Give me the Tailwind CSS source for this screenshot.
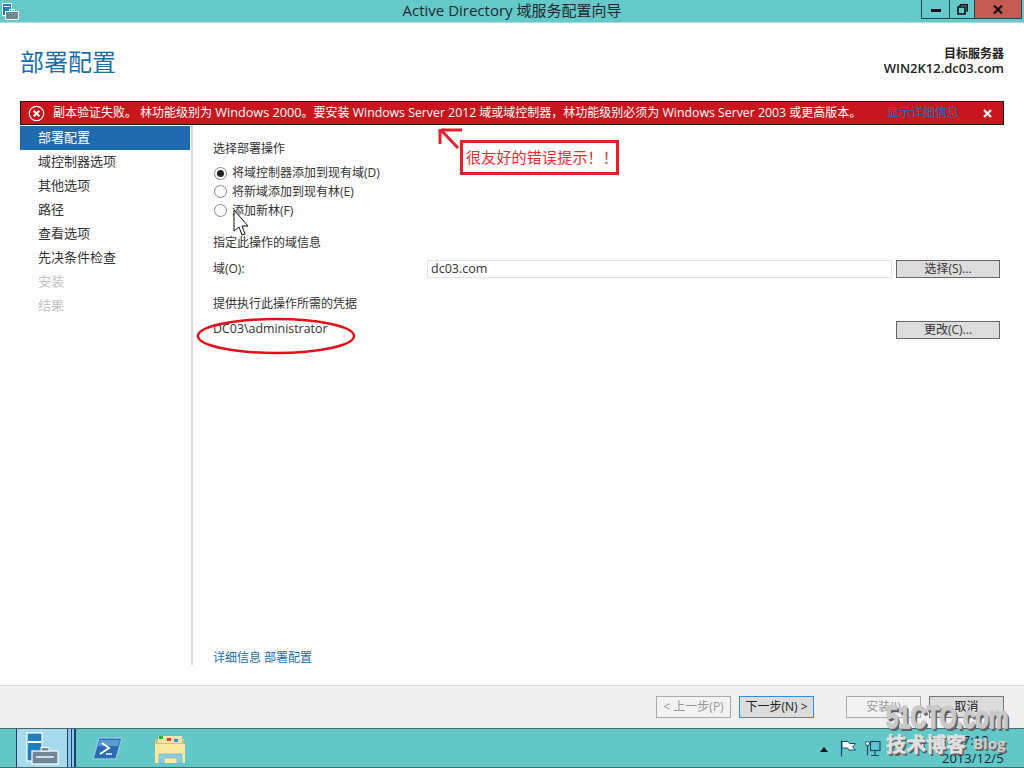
<!DOCTYPE html>
<html lang="zh-CN">
<head>
    <meta charset="UTF-8">
    <title>Active Directory 域服务配置向导</title>
    <script src="https://cdn.jsdelivr.net/npm/@tailwindcss/browser@4"></script>
</head>
<body class="bg-[#fdfdfd]">
    <div class="relative w-[1024px] h-[768px] overflow-hidden flex flex-col text-[12px] text-[#333] font-['Open_Sans','Noto_Sans_CJK_SC',sans-serif]">

        <!-- Title bar -->
        <div class="relative h-[23px] shrink-0 bg-[#64c9c8] border-b border-[#a9dcdc] flex items-center justify-center text-[15px] text-[#1e2a30]">
            <svg class="absolute left-[2px] top-[3px]" width="17" height="17" viewBox="0 0 17 17">
                <rect x="0.5" y="0.5" width="9" height="12" fill="#1f7fc0" stroke="#fff"/>
                <rect x="2" y="3" width="6" height="1" fill="#fff"/>
                <rect x="3.5" y="8.5" width="13" height="8" fill="#6f8796" stroke="#fff"/>
                <rect x="7.5" y="6.5" width="5" height="2" fill="none" stroke="#fff"/>
            </svg>
            <span class="relative top-[-1px]">Active Directory 域服务配置向导</span>
            <div class="absolute right-[2px] top-0 flex h-[19px] border border-t-0 border-[#1c4a5a]">
                <div class="w-[28px] flex items-center justify-center border-r border-[#1c4a5a]"><div class="w-[10px] h-[3px] mt-[3px] bg-[#111]"></div></div>
                <div class="w-[25px] flex items-center justify-center border-r border-[#1c4a5a]">
                    <svg width="11" height="11" viewBox="0 0 11 11"><path d="M3 0.8h7.2v7M3 0.8v2M8 3H1v7h7z" fill="none" stroke="#111" stroke-width="1.6"/></svg>
                </div>
                <div class="w-[46px] flex items-center justify-center bg-[#c75b52]">
                    <svg width="10" height="9" viewBox="0 0 10 9"><path d="M1 0.5l8 8M9 0.5l-8 8" stroke="#111" stroke-width="2.2"/></svg>
                </div>
            </div>
        </div>

        <!-- Header -->
        <div class="h-[78px] shrink-0 px-[20px] flex justify-between">
            <h1 class="mt-[22px] text-[24px] leading-[34px] text-[#1a6ea8] font-normal">部署配置</h1>
            <div class="mt-[23px] text-right font-semibold text-[#222] leading-[15px]">
                <div class="text-[12px]">目标服务器</div>
                <div class="text-[13px]">WIN2K12.dc03.com</div>
            </div>
        </div>

        <!-- Error banner -->
        <div class="mx-[20px] h-[24px] shrink-0 bg-[#c8161c] border border-[#1a1a1a] flex items-center text-white text-[12px] whitespace-nowrap">
            <svg class="ml-[7px] mr-[8px]" width="17" height="17" viewBox="0 0 17 17">
                <circle cx="8.5" cy="8.5" r="7.2" fill="none" stroke="#fff" stroke-width="1.2"/>
                <path d="M5.7 5.7l5.6 5.6M11.3 5.7l-5.6 5.6" stroke="#fff" stroke-width="2"/>
            </svg>
            <span class="w-[824px]">副本验证失败。 林功能级别为 <span class="text-[12.7px]">Windows 2000</span>。要安装 <span class="text-[12.3px]">Windows Server 2012</span> 域或域控制器，林功能级别必须为 <span class="text-[12.3px]">Windows Server 2003</span> 或更高版本。</span>
            <span class="text-[#1a6ec0] ml-[10px]">显示详细信息</span>
            <svg class="ml-auto mr-[11px]" width="9" height="9" viewBox="0 0 9 9"><path d="M1 1l7 7M8 1l-7 7" stroke="#fff" stroke-width="2.2"/></svg>
        </div>

        <!-- Main -->
        <div class="flex h-[560px] shrink-0">
            <nav class="w-[193px] shrink-0 pl-[20px] pt-[1px] h-[540px] border-r-2 border-[#d9d9d9] text-[13px]">
                <div class="h-[24px] leading-[22px] pl-[18px] w-[170px] bg-[#1e6bb0] text-white">部署配置</div>
                <div class="h-[24px] leading-[22px] pl-[18px]">域控制器选项</div>
                <div class="h-[24px] leading-[22px] pl-[18px]">其他选项</div>
                <div class="h-[24px] leading-[22px] pl-[18px]">路径</div>
                <div class="h-[24px] leading-[22px] pl-[18px]">查看选项</div>
                <div class="h-[24px] leading-[22px] pl-[18px]">先决条件检查</div>
                <div class="h-[24px] leading-[22px] pl-[18px] text-[#c4c4c4]">安装</div>
                <div class="h-[24px] leading-[22px] pl-[18px] text-[#c4c4c4]">结果</div>
            </nav>

            <div class="flex-1 pl-[20px] pr-[24px] flex flex-col">
                <div class="mt-[15px] h-[18px] leading-[18px]">选择部署操作</div>
                <div class="mt-[6px] flex flex-col">
                    <div class="h-[18px] flex items-center gap-[6px]">
                        <span class="ml-[1px] w-[13px] h-[13px] rounded-full border border-[#888] bg-white flex items-center justify-center"><span class="w-[7px] h-[7px] rounded-full bg-[#222]"></span></span>
                        <span class="-ml-[1px]">将域控制器添加到现有域(D)</span>
                    </div>
                    <div class="h-[19px] flex items-center gap-[6px]">
                        <span class="ml-[1px] w-[13px] h-[13px] rounded-full border border-[#888] bg-white"></span>
                        <span class="-ml-[1px]">将新域添加到现有林(E)</span>
                    </div>
                    <div class="h-[19px] flex items-center gap-[6px]">
                        <span class="ml-[1px] w-[13px] h-[13px] rounded-full border border-[#888] bg-white"></span>
                        <span class="-ml-[1px]">添加新林(F)</span>
                    </div>
                </div>
                <div class="mt-[14px] h-[18px] leading-[18px]">指定此操作的域信息</div>
                <div class="mt-[7px] h-[19px] flex items-center">
                    <span class="w-[214px]">域(O):</span>
                    <div class="w-[465px] h-[18px] leading-[16px] px-[3px] border border-[#dde3ea] bg-white text-[12.5px]">dc03.com</div>
                    <button class="ml-[4px] w-[104px] h-[18px] bg-[#dcdcdc] border border-[#666] leading-[15px]">选择(S)...</button>
                </div>
                <div class="mt-[17px] h-[18px] leading-[18px]">提供执行此操作所需的凭据</div>
                <div class="mt-[7px] h-[19px] flex items-center justify-between">
                    <span class="-mt-[1px] text-[12.4px]">DC03\administrator</span>
                    <button class="w-[104px] h-[18px] bg-[#dcdcdc] border border-[#666] leading-[15px]">更改(C)...</button>
                </div>
                <div class="mt-auto mb-[18px] text-[#1a6ea8]">详细信息 部署配置</div>
            </div>
        </div>

        <!-- Footer buttons -->
        <div class="h-[43px] shrink-0 bg-[#f0f0f1] border-t border-[#d9d6dc] relative">
            <button class="absolute left-[656px] top-[10px] w-[75px] h-[22px] border border-[#aaa] text-[#999] bg-[#f2f2f2]">&lt; 上一步(P)</button>
            <button class="absolute left-[739px] top-[10px] w-[75px] h-[22px] border border-[#2e8fdc] text-[#222] bg-[#dcdcdc]">下一步(N) &gt;</button>
            <button class="absolute left-[846px] top-[10px] w-[75px] h-[22px] border border-[#aaa] text-[#999] bg-[#f2f2f2]">安装(I)</button>
            <button class="absolute left-[929px] top-[10px] w-[75px] h-[22px] border border-[#777] text-[#222] bg-[#dcdcdc]">取消</button>
        </div>

        <!-- Taskbar -->
        <div class="relative h-[40px] shrink-0 bg-[#62c8c7] border-y border-[#4d6468] flex">
            <div class="ml-[16px] w-[60px] h-full bg-[#a6dbee] border-x border-[#1d3f6e] relative">
                <div class="absolute right-0 top-0 bottom-0 w-[8px] bg-[#8cc8f0] border-x border-[#1d3f6e]"></div>
                <div class="absolute right-[3px] top-0 bottom-0 w-px bg-[#1d3f6e]"></div>
                <svg class="absolute left-[9px] top-[3px]" width="33" height="33" viewBox="0 0 33 33">
                    <rect x="1" y="1" width="15" height="28" fill="#1f7fc0" stroke="#fff" stroke-width="1.2"/>
                    <rect x="2" y="9" width="13" height="2" fill="#fff"/>
                    <rect x="6" y="19" width="26" height="13" fill="#6f8796" stroke="#fff" stroke-width="1.2"/>
                    <rect x="15" y="15.5" width="8" height="3.5" fill="#6f8796" stroke="#fff"/>
                    <path d="M10 25h18" stroke="#fff" stroke-width="1.4"/>
                </svg>
            </div>
            <svg class="ml-[16px] mt-[8px]" width="31" height="23" viewBox="0 0 31 23">
                <path d="M7 1h23l-6 21H1z" fill="#2b6cb0" stroke="#8fc3e6" stroke-width="1.4"/>
                <path d="M8 3h20l-2 6H6z" fill="#5a9bd0"/>
                <path d="M10 6l7 5-9 6" fill="none" stroke="#fff" stroke-width="2"/>
                <path d="M14 17h6" stroke="#fff" stroke-width="1.4"/>
            </svg>
            <svg class="ml-[31px] mt-[6px]" width="32" height="29" viewBox="0 0 32 29">
                <path d="M1 4h29l1 24H1z" fill="#dfc075"/>
                <rect x="4" y="1" width="24" height="7" fill="#f5e3b0"/>
                <rect x="5" y="1" width="4" height="3" fill="#18b52c"/>
                <rect x="13" y="3" width="4" height="3" fill="#d8452e"/>
                <rect x="20" y="4" width="4" height="3" fill="#2a9bd0"/>
                <path d="M1 9h30v19H1z" fill="#fbe9a0"/>
                <path d="M5 28v-9h23v9h-5v-5H10v5z" fill="#8ccde4" stroke="#6ba9c6" stroke-width="0.6"/>
            </svg>
            <!-- tray -->
            <svg class="absolute left-[820px] top-[18px]" width="8" height="5" viewBox="0 0 8 5"><path d="M4 0l4 5H0z" fill="#111"/></svg>
            <svg class="absolute left-[840px] top-[11px]" width="16" height="17" viewBox="0 0 16 17"><path d="M1.5 0.5v16" stroke="#174a7a" stroke-width="1.3"/><path d="M2 1.5h6l1.5 2h6l-3 3.5 3 3H9l-1.500-2H2z" fill="#fff" stroke="#174a7a"/></svg>
            <svg class="absolute left-[865px] top-[11px]" width="16" height="17" viewBox="0 0 16 17">
                <rect x="5.500" y="1.500" width="9.500" height="9" fill="none" stroke="#174a7a" stroke-width="1.2"/>
                <circle cx="2.500" cy="3.500" r="2" fill="#fff" stroke="#174a7a"/>
                <path d="M2.500 5.500v10M6 15.500h8M10 10.500v5" stroke="#174a7a" stroke-width="1.2"/>
            </svg>
            <svg class="absolute left-[893px] top-[20px]" width="9" height="8" viewBox="0 0 9 8"><circle cx="4.500" cy="4" r="3" fill="#d8232a"/></svg>
            <svg class="absolute left-[916px] top-[12px]" width="10" height="13" viewBox="0 0 10 13"><path d="M1 4.500h3l4-3.500v11l-4-3.500H1z" fill="#fff" stroke="#174a7a"/></svg>
            <div class="absolute left-[942px] w-[60px] top-[2px] text-center text-[13px] leading-[18px] text-[#16283a]">
                <div>17:12</div>
                <div>2013/12/5</div>
            </div>
        </div>

        <!-- Annotations -->
        <svg class="absolute left-[190px] top-[125px] pointer-events-none" width="300" height="240" viewBox="0 0 300 240">
            <path d="M251 5H272M250 4V19M251 5L268 23" fill="none" stroke="#e9202c" stroke-width="3"/>
            <ellipse cx="86" cy="211" rx="78" ry="17" fill="none" stroke="#e3101c" stroke-width="2.500"/>
            <path d="M44 85v21l5-4 3 8 3-1-3-8h6z" fill="#fff" stroke="#111"/>
        </svg>
        <div class="absolute left-[460px] top-[140px] w-[159px] h-[35px] border-[3px] border-[#ee1c25] bg-white flex items-center pl-[3px] text-[15px] tracking-[0.2px] text-[#ee2a2f] whitespace-nowrap">很友好的错误提示！！</div>

        <!-- Watermark -->
        <div class="absolute left-[886px] top-[699px] text-[32px] leading-[36px] font-bold text-[#c9c9c9] [-webkit-text-stroke:1.5px_#c9c9c9] [text-shadow:1px_1px_0_#777,2px_2px_0_#666,3px_3px_0_#5c5c5c] font-['Liberation_Sans',sans-serif] scale-x-[0.69] origin-left whitespace-nowrap">51CTO.com</div>
        <div class="absolute left-[886px] top-[732px] text-[20px] leading-[26px] font-bold text-[#e0e0e0] [-webkit-text-stroke:0.5px_#e0e0e0] [text-shadow:1px_1px_0_#777,2px_2px_0_#5c5c5c] whitespace-nowrap">技术博客</div>
        <div class="absolute left-[973px] top-[732px] text-[15px] font-bold text-[#d0d0d0] [text-shadow:1px_1px_0_#777,2px_2px_0_#666]">Blog</div>
    </div>
</body>
</html>
